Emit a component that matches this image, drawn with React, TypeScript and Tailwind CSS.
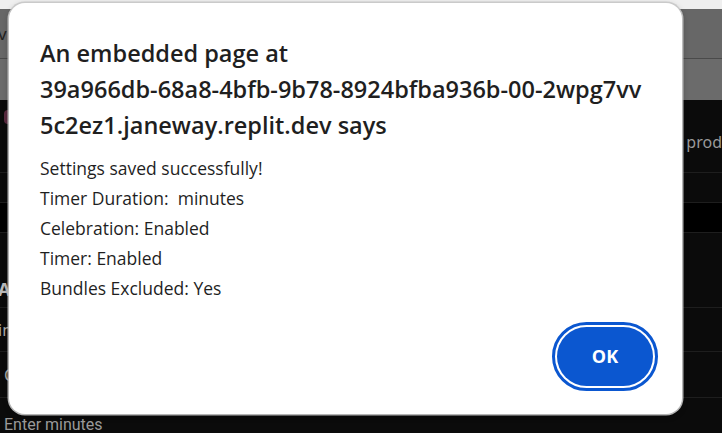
export default function App() {
  const lines = [
    "Settings saved successfully!",
    "Timer Duration:  minutes",
    "Celebration: Enabled",
    "Timer: Enabled",
    "Bundles Excluded: Yes",
  ];

  return (
    <div className="relative h-[433px] w-[722px] overflow-hidden bg-[#0a0a0a] font-['Noto_Sans',sans-serif]">
      {/* dimmed page behind the dialog */}
      <div className="flex flex-col">
        <div className="h-[9px] bg-[#efefef]" />
        <div className="flex h-[49px] items-center bg-[#676767] text-[17px] text-[#222]">
          <span className="-ml-[2px]">v</span>
        </div>
        <div className="h-px bg-[#4a4a4a]" />
        <div className="h-[41px] bg-[#6b6b6b]" />
        <div className="flex h-[72px] items-start justify-between bg-[#0b0b0b] pt-[10px]">
          <span className="ml-[4px] h-[14px] w-[8px] rounded-full bg-[#5a2a40]" />
          <span className="mt-[20px] text-[16px] text-[#9a9a9a]">prod</span>
        </div>
        <div className="h-[30px] border-t border-[#1e1e1e] bg-[#0b0b0b]" />
        <div className="h-[30px] border-t border-[#1e1e1e] bg-[#000]" />
        <div className="flex h-[75px] items-end border-t border-[#1e1e1e] bg-[#0b0b0b] pb-[4px] text-[18px] font-bold text-[#bbb]">
          <span className="-ml-[2px]">A</span>
        </div>
        <div className="flex h-[44px] items-center border-t border-[#1e1e1e] bg-[#0b0b0b] text-[16px] text-[#aaa]">
          <span className="-ml-[2px]">in</span>
        </div>
        <div className="flex h-[46px] items-center border-t border-[#1e1e1e] bg-[#0b0b0b] text-[16px] text-[#aaa]">
          <span className="ml-[4px]">C</span>
        </div>
        <div className="flex h-[36px] items-end border-t border-[#1e1e1e] bg-[#0b0b0b] font-['Roboto',sans-serif] text-[16px] text-[#9a9a9a]">
          <span className="ml-[4px] translate-y-[4px]">Enter minutes</span>
        </div>
      </div>

      {/* alert dialog */}
      <div className="absolute left-[9px] top-[3px] flex h-[411px] w-[673px] flex-col rounded-[16px] bg-white pl-[31px] pr-[20px] pt-[32px] font-['Open_Sans',sans-serif] text-[#1f1f1f] shadow-[0_0_0_1.5px_rgba(200,200,200,0.9),0_2px_6px_rgba(0,0,0,0.3)]">
        <div className="text-[23.5px] font-semibold leading-[36px]">
          <div>An embedded page at</div>
          <div>39a966db-68a8-4bfb-9b78-8924bfba936b-00-2wpg7vv</div>
          <div>5c2ez1.janeway.replit.dev says</div>
        </div>
        <div className="mt-[10px] text-[17.5px] leading-[30px]">
          {lines.map((l) => (
            <div key={l} className="whitespace-pre">
              {l}
            </div>
          ))}
        </div>
        <div className="mt-auto mb-[23px] mr-[4px] flex justify-end">
          <button className="flex h-[69px] w-[106px] items-center justify-center rounded-full border-[3px] border-[#0b57d0] bg-white p-[2px]">
            <span className="flex h-full w-full items-center justify-center rounded-full bg-[#0b57d0] text-[18px] font-bold text-white">
              OK
            </span>
          </button>
        </div>
      </div>
    </div>
  );
}
